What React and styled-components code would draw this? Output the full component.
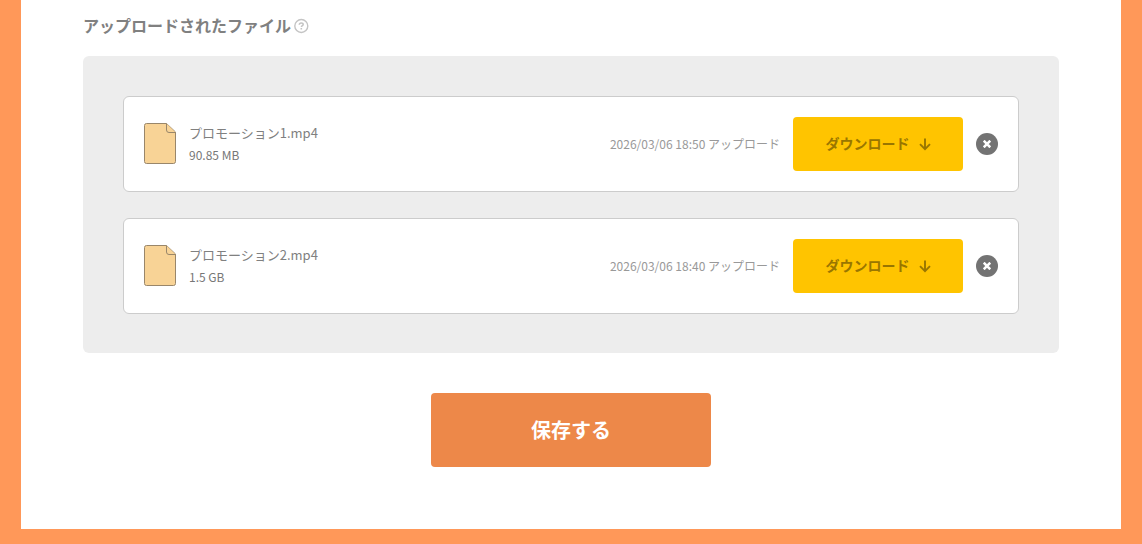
import React, { useState } from "react";
import styled, { createGlobalStyle } from "styled-components";

const frameColor = "#ff9859";
const saveColor = "#ed8849";
const downloadColor = "#ffc400";
const textColor = "#777";

const GlobalStyle = createGlobalStyle`
  * {
    box-sizing: border-box;
  }

  body {
    margin: 0;
    background: ${frameColor};
    color: ${textColor};
    font-family: "Noto Sans CJK JP", sans-serif;
  }

  button {
    border: none;
    padding: 0;
    font-family: inherit;
    cursor: pointer;
  }
`;

const Page = styled.div`
  padding: 0 21px 15px;
`;

const Form = styled.form`
  display: flex;
  flex-direction: column;
  align-items: center;
  padding: 14px 62px 62px;
  background: #fff;
`;

const Heading = styled.div`
  display: flex;
  align-items: center;
  align-self: stretch;
  gap: 2px;
  margin-bottom: 18px;
`;

const Title = styled.h2`
  margin: 0;
  padding-bottom: 2px;
  color: #808080;
  font-size: 16px;
  font-weight: 700;
  line-height: 22px;
`;

const HelpButton = styled.button`
  display: flex;
  background: transparent;
  color: #c4c4c4;
`;

const Panel = styled.ul`
  display: flex;
  flex-direction: column;
  align-self: stretch;
  gap: 26px;
  margin: 0 0 40px;
  padding: 40px 40px 39px;
  list-style: none;
  background: #ededed;
  border-radius: 6px;
`;

const Card = styled.li`
  display: flex;
  align-items: center;
  gap: 13px;
  padding: 20px;
  background: #fff;
  border: 1px solid #ccc;
  border-radius: 6px;
`;

const Info = styled.div`
  flex: 1;
  min-width: 0;
`;

const FileName = styled.div`
  color: #808080;
  font-size: 13px;
  line-height: 22px;
`;

const FileSize = styled(FileName)`
  color: ${textColor};
  font-size: 12px;
`;

const Uploaded = styled.div`
  color: #999;
  font-size: 12px;
  line-height: 22px;
`;

const DownloadButton = styled.button`
  display: flex;
  align-items: center;
  justify-content: center;
  gap: 9px;
  width: 170px;
  height: 54px;
  padding-bottom: 2px;
  background: ${downloadColor};
  border-radius: 4px;
  color: #997600;
  font-size: 14px;
  font-weight: 700;
`;

const RemoveButton = styled.button`
  display: flex;
  align-items: center;
  justify-content: center;
  width: 22px;
  height: 22px;
  background: #737373;
  border-radius: 50%;
  color: #fff;
`;

const SaveButton = styled.button`
  width: 280px;
  height: 74px;
  padding-bottom: 2px;
  background: ${saveColor};
  border-radius: 4px;
  color: #fff;
  font-size: 20px;
  font-weight: 700;
`;

const HelpIcon = () => (
  <svg width="16" height="16" viewBox="0 0 16 16" fill="none" stroke="currentColor" aria-hidden="true">
    <circle cx="8.3" cy="8" r="6.5" strokeWidth="1.4" />
    <path d="M6.3 6.7C6.3 5.5 7.2 4.9 8.2 4.9s2 .6 2 1.6c0 1.2-1.8 1.2-1.8 2.6" strokeWidth="1.5" />
    <path d="M8.3 10v1.5" strokeWidth="1.6" />
  </svg>
);

const FileIcon = () => (
  <svg width="32" height="42" viewBox="0 0 32 42" fill="#f8d396" stroke="#99866a" aria-hidden="true">
    <path d="M2.5.5h20l9 8.5v29.5a2 2 0 0 1-2 2h-27a2 2 0 0 1-2-2v-36a2 2 0 0 1 2-2z" />
    <path d="M22.5.5v6.5a2.5 2.5 0 0 0 2.5 2.5h6.5" />
  </svg>
);

const ArrowIcon = () => (
  <svg width="12" height="16" viewBox="0 0 12 16" fill="none" stroke="currentColor" strokeWidth="1.9" aria-hidden="true">
    <path d="M6 3.5v11M1 9.2l5 5 5-5" />
  </svg>
);

const CloseIcon = () => (
  <svg width="8" height="8" viewBox="0 0 8 8" fill="none" stroke="currentColor" strokeWidth="2.6" aria-hidden="true">
    <path d="M.7.7l6.6 6.6M7.3.7L.7 7.3" />
  </svg>
);

const initialFiles = [
  { id: 1, name: "プロモーション1.mp4", size: "90.85 MB", date: "2026/03/06 18:50" },
  { id: 2, name: "プロモーション2.mp4", size: "1.5 GB", date: "2026/03/06 18:40" }
];

const App = () => {
  const [files, setFiles] = useState(initialFiles);

  function removeFile(id) {
    setFiles(oldFiles => oldFiles.filter(file => file.id !== id));
  }

  function renderFile(file) {
    return (
      <Card key={file.id}>
        <FileIcon />
        <Info>
          <FileName>{file.name}</FileName>
          <FileSize>{file.size}</FileSize>
        </Info>
        <Uploaded>{file.date} アップロード</Uploaded>
        <DownloadButton type="button">
          ダウンロード
          <ArrowIcon />
        </DownloadButton>
        <RemoveButton type="button" aria-label="削除" onClick={() => removeFile(file.id)}>
          <CloseIcon />
        </RemoveButton>
      </Card>
    );
  }

  return (
    <Page>
      <GlobalStyle />
      <Form onSubmit={e => e.preventDefault()}>
        <Heading>
          <Title>アップロードされたファイル</Title>
          <HelpButton type="button" aria-label="ヘルプ">
            <HelpIcon />
          </HelpButton>
        </Heading>
        <Panel>{files.map(renderFile)}</Panel>
        <SaveButton type="submit">保存する</SaveButton>
      </Form>
    </Page>
  );
};

export default App;
